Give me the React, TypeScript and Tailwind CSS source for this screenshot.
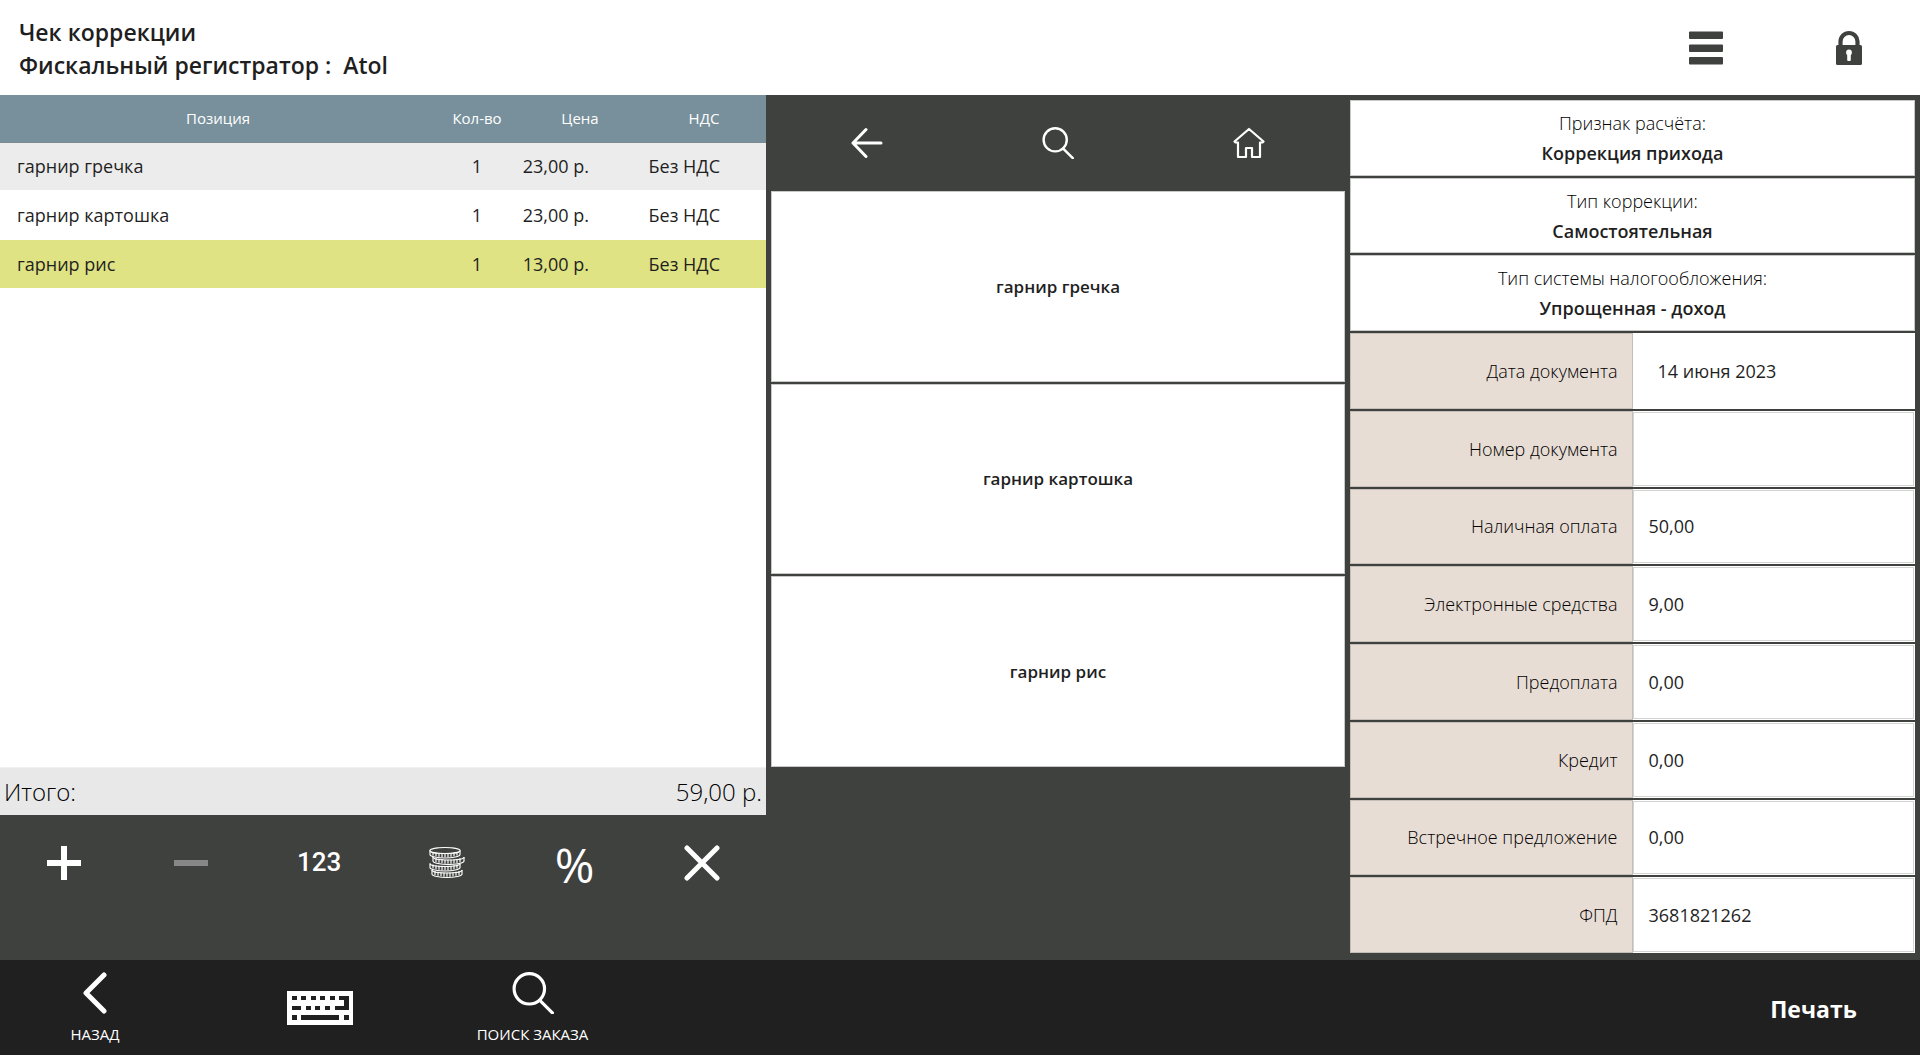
import type { InputHTMLAttributes, ReactNode } from "react";

const positions = [
  { name: "гарнир гречка", qty: 1, price: "23,00 р.", vat: "Без НДС", row: "bg-[#ececec]" },
  { name: "гарнир картошка", qty: 1, price: "23,00 р.", vat: "Без НДС", row: "bg-white" },
  { name: "гарнир рис", qty: 1, price: "13,00 р.", vat: "Без НДС", row: "bg-[#dfe384]" },
];

const settings = [
  { label: "Признак расчёта:", value: "Коррекция прихода" },
  { label: "Тип коррекции:", value: "Самостоятельная" },
  { label: "Тип системы налогообложения:", value: "Упрощенная - доход" },
];

const fields = [
  { id: "doc-number", label: "Номер документа", value: "" },
  { id: "cash", label: "Наличная оплата", value: "50,00" },
  { id: "electronic", label: "Электронные средства", value: "9,00" },
  { id: "prepaid", label: "Предоплата", value: "0,00" },
  { id: "credit", label: "Кредит", value: "0,00" },
  { id: "counter", label: "Встречное предложение", value: "0,00" },
  { id: "fpd", label: "ФПД", value: "3681821262" },
];

function MenuIcon() {
  return (
    <svg className="h-9 w-9" viewBox="0 0 36 36" fill="currentColor">
      <rect x="1" y="1.500" width="34" height="7.500" rx="1" />
      <rect x="1" y="14.500" width="34" height="7.500" rx="1" />
      <rect x="1" y="27" width="34" height="7.500" rx="1" />
    </svg>
  );
}

function LockIcon() {
  return (
    <svg className="h-9 w-9" viewBox="0 0 36 36">
      <path d="M9.500 16v-4.500a8.500 8.500 0 0 1 17 0V16" fill="none" stroke="currentColor" strokeWidth="4.200" />
      <rect x="5" y="15" width="26" height="20" rx="1.500" fill="currentColor" />
      <circle cx="18" cy="22.500" r="2.900" fill="white" />
      <rect x="16.200" y="22" width="3.600" height="9" rx="1" fill="white" />
    </svg>
  );
}

function ArrowLeftIcon() {
  return (
    <svg className="h-8 w-8" viewBox="0 0 32 32" fill="none" stroke="currentColor" strokeWidth="3" strokeLinecap="round" strokeLinejoin="round">
      <path d="M15 2.500 2 16l13 13.500M2 16h28" />
    </svg>
  );
}

function SearchIcon({ className, strokeWidth }: { className: string; strokeWidth: number }) {
  return (
    <svg className={className} viewBox="0 0 40 40" fill="none" stroke="currentColor" strokeWidth={strokeWidth} strokeLinecap="round">
      <circle cx="16.500" cy="16" r="14.500" />
      <path d="m26.500 27 12 12" />
    </svg>
  );
}

function HomeIcon() {
  return (
    <svg className="h-8 w-8" viewBox="0 0 32 32" fill="none" stroke="currentColor" strokeWidth="2.200" strokeLinejoin="round">
      <path d="M16 2 1.500 14.500l1 1H5V30h8v-9h6v9h8V15.500h2.500l1-1z" />
    </svg>
  );
}

function PlusIcon() {
  return (
    <svg className="h-9 w-9" viewBox="0 0 36 36" stroke="currentColor" strokeWidth="6">
      <path d="M18 1v34M1 18h34" />
    </svg>
  );
}

function MinusIcon() {
  return (
    <svg className="h-9 w-9" viewBox="0 0 36 36" stroke="currentColor" strokeWidth="6">
      <path d="M1 18h34" />
    </svg>
  );
}

function CloseIcon() {
  return (
    <svg className="h-9 w-9" viewBox="0 0 36 36" stroke="currentColor" strokeWidth="5" strokeLinecap="round">
      <path d="m3 3 30 30M33 3 3 33" />
    </svg>
  );
}

// One coin of the stack: a ribbed rim under a curved top edge
function Coin({ x, y, width }: { x: number; y: number; width: number }) {
  const ribs = [3, 6, 9, 12, 15, 18, 21, 24, 27].filter((rib) => rib < width - 1);
  const half = width / 2;
  return (
    <g>
      <path
        d={`M${x} ${y}v4c0 2 ${half / 2} 3.500 ${half} 3.500s${half} -1.500 ${half} -3.500v-4`}
        fill="#3f413f"
      />
      <path d={`M${x} ${y}c0 2 ${half / 2} 3 ${half} 3s${half} -1 ${half} -3`} />
      {ribs.map((rib) => {
        const bend = 2.8 * (1 - Math.pow((rib - half) / half, 2));
        return <path key={rib} d={`M${x + rib} ${y + bend}v4`} />;
      })}
    </g>
  );
}

function CoinsIcon() {
  return (
    <svg className="h-9 w-9" viewBox="0 0 36 36" fill="none" stroke="currentColor" strokeWidth="1.150">
      <Coin x={3} y={25} width={30} />
      <Coin x={1} y={18.5} width={30} />
      <Coin x={4} y={12} width={31} />
      <Coin x={1} y={5.5} width={30} />
      <ellipse cx="16" cy="5.500" rx="15" ry="3" fill="#3f413f" />
    </svg>
  );
}

function ChevronLeftIcon() {
  return (
    <svg className="h-[42px] w-[42px]" viewBox="0 0 42 42" fill="none" stroke="currentColor" strokeWidth="5" strokeLinecap="round" strokeLinejoin="round">
      <path d="M30 3 12 21l18 18" />
    </svg>
  );
}

function KeyboardIcon() {
  return (
    <svg className="h-[34px] w-[66px]" viewBox="0 0 66 34">
      <rect width="66" height="34" fill="currentColor" />
      <g fill="#202020">
        <path d="M5 5h5v4H5zM14 5h5v4h-5zM24 5h5v4h-5zM33 5h5v4h-5zM43 5h5v4h-5zM52 5h10v14H48v-4h9V9h-5z" />
        <path d="M5 15h9v4H5zM19 15h5v4h-5zM28 15h5v4h-5zM38 15h5v4h-5z" />
        <path d="M5 24h5v5H5zM14 24h38v5H14zM57 24h5v5h-5z" />
      </g>
    </svg>
  );
}

function IconButton({
  label,
  disabled,
  className = "",
  children,
}: {
  label: string;
  disabled?: boolean;
  className?: string;
  children: ReactNode;
}) {
  return (
    <button
      type="button"
      aria-label={label}
      disabled={disabled}
      className={`flex items-center justify-center disabled:text-[#868786] ${className}`}
    >
      {children}
    </button>
  );
}

function Header() {
  return (
    <header className="flex h-[95px] bg-white">
      <div className="flex-1 pt-4 pl-[19px] text-[23px]/[33px] font-semibold">
        <h1>Чек коррекции</h1>
        <p className="whitespace-pre">Фискальный регистратор :  Atol</p>
      </div>
      <IconButton label="Меню" className="w-[143px] text-[#3f413f]">
        <MenuIcon />
      </IconButton>
      <IconButton label="Заблокировать" className="w-[143px] text-[#3f413f]">
        <LockIcon />
      </IconButton>
    </header>
  );
}

function Receipt() {
  return (
    <section className="flex flex-col">
      <div className="flex-1 bg-white">
        <table className="w-full table-fixed text-lg/6">
          <colgroup>
            <col />
            <col className="w-[82px]" />
            <col className="w-[124px]" />
            <col className="w-[124px]" />
          </colgroup>
          <thead className="bg-[#78909c] text-[15px]/5 text-white">
            <tr className="h-[47px] border-b border-[#7b8a90]">
              <th className="font-normal">Позиция</th>
              <th className="font-normal">Кол-во</th>
              <th className="font-normal">Цена</th>
              <th className="font-normal">НДС</th>
            </tr>
          </thead>
          <tbody>
            {positions.map((position) => (
              <tr
                key={position.name}
                className={`h-[49px] border-b border-white first:h-12 ${position.row}`}
              >
                <td className="pl-[17px]">{position.name}</td>
                <td className="text-center">{position.qty}</td>
                <td className="pr-[53px] text-right whitespace-nowrap">{position.price}</td>
                <td className="pr-[46px] text-right whitespace-nowrap">{position.vat}</td>
              </tr>
            ))}
          </tbody>
        </table>
      </div>
      <div className="flex h-12 items-center justify-between border-t border-[#f0f0f0] bg-[#e8e8e8] px-1 text-2xl font-light text-black">
        <span>Итого:</span>
        <span>59,00 р.</span>
      </div>
      <div className="grid h-[145px] grid-cols-6 pb-[50px] text-white">
        <IconButton label="Добавить">
          <PlusIcon />
        </IconButton>
        <IconButton label="Убавить" disabled>
          <MinusIcon />
        </IconButton>
        <button type="button" className="font-['Roboto'] text-[26px] font-medium">
          123
        </button>
        <IconButton label="Оплата">
          <CoinsIcon />
        </IconButton>
        <button type="button" className="pt-1 text-5xl">
          %
        </button>
        <IconButton label="Удалить">
          <CloseIcon />
        </IconButton>
      </div>
    </section>
  );
}

function Catalog() {
  return (
    <section>
      <div className="grid h-24 grid-cols-3 text-white">
        <IconButton label="Назад">
          <ArrowLeftIcon />
        </IconButton>
        <IconButton label="Поиск">
          <SearchIcon className="h-8 w-8" strokeWidth={3} />
        </IconButton>
        <IconButton label="Домой">
          <HomeIcon />
        </IconButton>
      </div>
      <div className="grid h-[576px] grid-rows-3 gap-0.5">
        {positions.map((position) => (
          <button
            key={position.name}
            type="button"
            className="border border-[#c8c8c8] bg-white text-[17px] font-semibold"
          >
            {position.name}
          </button>
        ))}
      </div>
    </section>
  );
}

function Field({
  id,
  label,
  className = "",
  ...input
}: InputHTMLAttributes<HTMLInputElement> & { id: string; label: string }) {
  return (
    <div className="grid grid-cols-2 bg-white">
      <label
        htmlFor={id}
        className="flex items-center justify-end border border-[#c4bdb8] bg-[#e8ddd5] pr-[14px] font-light text-black"
      >
        {label}
      </label>
      <input id={id} type="text" className={`my-px mr-px min-w-0 border outline-none ${className}`} {...input} />
    </div>
  );
}

function Details() {
  return (
    <section className="grid auto-rows-fr gap-0.5 pt-[5px] pb-[7px] text-lg/[30px]">
      {settings.map((setting) => (
        <button key={setting.label} type="button" className="border border-[#c8c8c8] bg-white">
          <span className="block font-light text-black">{setting.label}</span>
          <span className="block font-semibold">{setting.value}</span>
        </button>
      ))}
      <Field
        id="doc-date"
        label="Дата документа"
        defaultValue="14 июня 2023"
        className="border-transparent px-6"
      />
      {fields.map((field) => (
        <Field
          key={field.id}
          id={field.id}
          label={field.label}
          defaultValue={field.value}
          className="border-[#d4d4d4] px-[15px]"
        />
      ))}
    </section>
  );
}

function Footer() {
  return (
    <footer className="flex h-[95px] bg-[#202020] text-white">
      <button
        type="button"
        className="mr-[23px] flex w-[190px] flex-col items-center gap-2 pt-3 text-[15px]/6"
      >
        <ChevronLeftIcon />
        НАЗАД
      </button>
      <IconButton label="Клавиатура" className="w-[213px]">
        <KeyboardIcon />
      </IconButton>
      <button type="button" className="flex w-[213px] flex-col items-center gap-2 pt-3 text-[15px]/6">
        <SearchIcon className="h-[42px] w-[42px]" strokeWidth={3} />
        ПОИСК ЗАКАЗА
      </button>
      <button type="button" className="ml-auto w-[213px] pt-1 text-[23px] font-bold">
        Печать
      </button>
    </footer>
  );
}

export default function App() {
  return (
    <div className="flex min-h-screen flex-col bg-[#3f413f] font-['Open_Sans','Noto_Sans',sans-serif] text-[#1f1f1f]">
      <Header />
      <main className="grid flex-1 grid-cols-[766fr_574fr_565fr] gap-x-[5px] pr-[5px]">
        <Receipt />
        <Catalog />
        <Details />
      </main>
      <Footer />
    </div>
  );
}
